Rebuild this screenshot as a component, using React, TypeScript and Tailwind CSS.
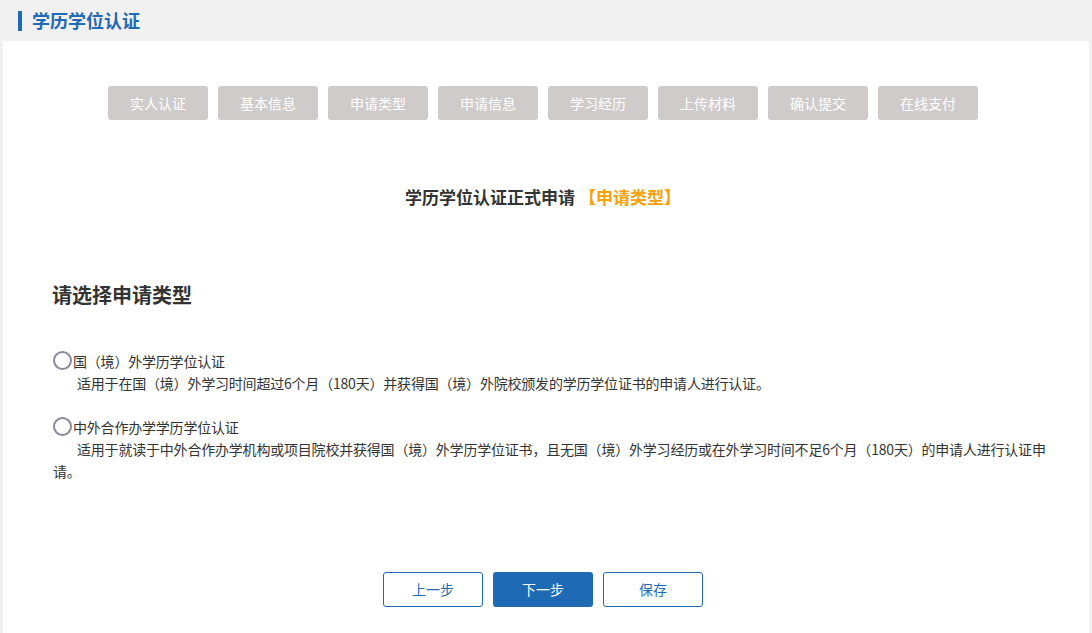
export default function App() {
  const steps = ["实人认证", "基本信息", "申请类型", "申请信息", "学习经历", "上传材料", "确认提交", "在线支付"];
  const f = { fontFamily: '"Microsoft YaHei","Noto Sans CJK SC",sans-serif' };
  return (
    <div className="w-[1092px] h-[633px] bg-[#f1f1f1] overflow-hidden text-[#333]" style={f}>
      <div className="h-[41px] flex items-center pl-[18px]">
        <div className="w-[4px] h-[20px] bg-[#1f6ab4] mr-[10px]" />
        <div className="text-[18px] font-bold text-[#1f6ab4]">学历学位认证</div>
      </div>
      <div className="mx-[3px] bg-white h-[592px] flex flex-col">
        <div className="flex justify-center gap-[10px] pt-[45px] pr-[6px]">
          {steps.map((s) => (
            <div key={s} className="w-[100px] h-[34px] rounded-[3px] bg-[#cfcbca] text-white text-[14px] flex items-center justify-center">{s}</div>
          ))}
        </div>
        <div className="text-center text-[17px] font-bold mt-[64px] pr-[6px]">
          学历学位认证正式申请 <span className="text-[#f5a10a]">【申请类型】</span>
        </div>
        <div className="text-[20px] font-bold mt-[70px] ml-[49px]">请选择申请类型</div>
        <div className="ml-[50px] mr-[40px] mt-[40px] text-[14px] leading-[22px] tracking-[-0.2px]">
          <div className="flex items-center">
            <span className="w-[19px] h-[19px] rounded-full border-2 border-[#8a8a96] mr-[1px]" />
            <span>国（境）外学历学位认证</span>
          </div>
          <div className="pl-[24px]">适用于在国（境）外学习时间超过6个月（180天）并获得国（境）外院校颁发的学历学位证书的申请人进行认证。</div>
          <div className="flex items-center mt-[22px]">
            <span className="w-[19px] h-[19px] rounded-full border-2 border-[#8a8a96] mr-[1px]" />
            <span>中外合作办学学历学位认证</span>
          </div>
          <div className="indent-[24px]">适用于就读于中外合作办学机构或项目院校并获得国（境）外学历学位证书，且无国（境）外学习经历或在外学习时间不足6个月（180天）的申请人进行认证申请。</div>
        </div>
        <div className="flex justify-center gap-[10px] mt-[90px] pr-[6px]">
          <div className="w-[100px] h-[35px] rounded-[3px] border border-[#1f6ab4] text-[#1f6ab4] text-[14px] flex items-center justify-center">上一步</div>
          <div className="w-[100px] h-[35px] rounded-[3px] bg-[#1f6ab4] text-white text-[14px] flex items-center justify-center">下一步</div>
          <div className="w-[100px] h-[35px] rounded-[3px] border border-[#1f6ab4] text-[#1f6ab4] text-[14px] flex items-center justify-center">保存</div>
        </div>
      </div>
    </div>
  );
}
